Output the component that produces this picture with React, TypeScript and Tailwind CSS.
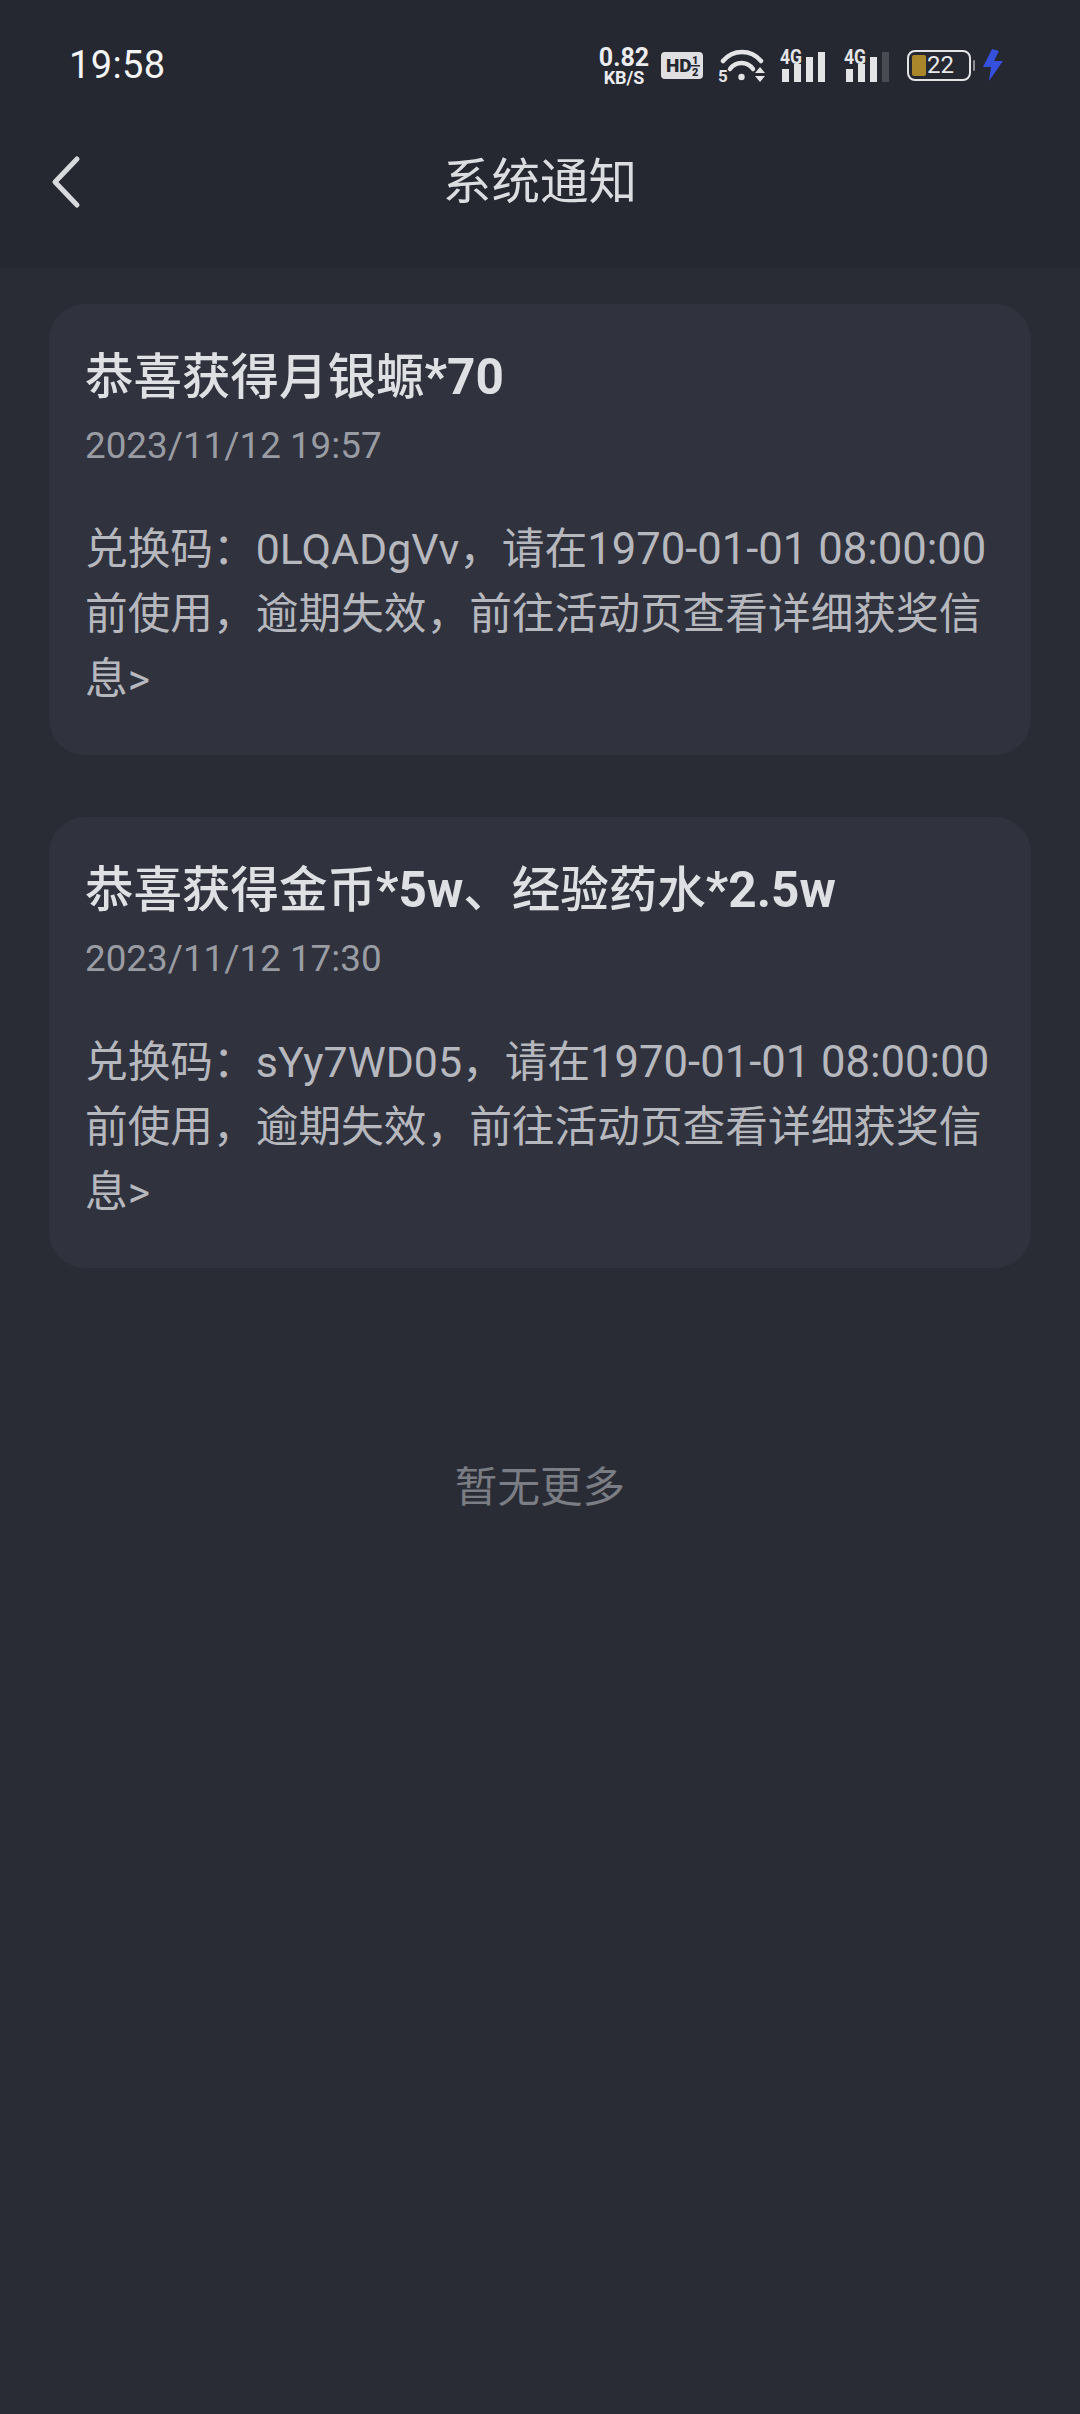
import React from 'react';

const NOTICES = [
  {
    title: [
      { text: '恭喜获得月银螈', bold: false },
      { text: '*70', bold: true },
    ],
    time: '2023/11/12 19:57',
    code: '0LQADgVv',
  },
  {
    title: [
      { text: '恭喜获得金币', bold: false },
      { text: '*5w', bold: true },
      { text: '、经验药水', bold: false },
      { text: '*2.5w', bold: true },
    ],
    time: '2023/11/12 17:30',
    code: 'sYy7WD05',
  },
];

const fontStack = "font-['Roboto','Noto_Sans_CJK_SC',sans-serif]";

const SignalIcon: React.FC<{ bars: number }> = ({ bars }) => (
  <svg width="48" height="33" viewBox="0 0 48 33" className="shrink-0 overflow-visible">
    <text x="0" y="15" fontFamily="Roboto" fontSize="20" fontWeight="700" fill="#e4e4e6" textLength="22" lengthAdjust="spacingAndGlyphs">4G</text>
    <rect x="2" y="20" width="7" height="13" fill="#e4e4e6" />
    <rect x="14" y="15" width="7" height="18" fill={bars > 1 ? '#e4e4e6' : '#4a4c54'} />
    <rect x="26" y="8" width="7" height="25" fill={bars > 2 ? '#e4e4e6' : '#4a4c54'} />
    <rect x="38" y="3" width="7" height="30" fill={bars > 3 ? '#e4e4e6' : '#4a4c54'} />
  </svg>
);

const StatusBar = () => (
  <div className="flex h-[128px] items-center justify-between pl-[69px] pr-[77px] pt-[2px]">
    <span className="text-[38px] leading-none font-normal text-[#f4f4f5] font-['Roboto',sans-serif] tracking-[0.4px]">19:58</span>
    <div className="flex items-center">
      {/* network speed */}
      <div className="flex w-[52px] flex-col items-center font-['Roboto',sans-serif] font-bold text-[#ececee]">
        <span className="text-[25px] leading-[24px]">0.82</span>
        <span className="text-[18px] leading-[15px]">KB/S</span>
      </div>
      {/* HD call badge */}
      <svg width="42" height="27" viewBox="0 0 42 27" className="ml-[11px] shrink-0 overflow-visible">
        <rect width="42" height="27" rx="4" fill="#dfdfe1" />
        <text x="5" y="20" fontFamily="Roboto" fontSize="19" fontWeight="900" fill="#25272f">HD</text>
        <text x="31" y="12" fontFamily="Roboto" fontSize="11" fontWeight="900" fill="#25272f">1</text>
        <rect x="30" y="13" width="9" height="1.5" fill="#25272f" />
        <text x="31" y="24" fontFamily="Roboto" fontSize="11" fontWeight="900" fill="#25272f">2</text>
      </svg>
      {/* wifi with up/down arrows */}
      <svg width="49" height="34" viewBox="0 0 49 34" className="ml-[15px] shrink-0 overflow-visible">
        <path d="M5 13 C15 1 33 1 43 13" fill="none" stroke="#e4e4e6" strokeWidth="4.5" strokeLinecap="round" />
        <path d="M12 21 C18 13 29 13 35 21" fill="none" stroke="#e4e4e6" strokeWidth="4.5" strokeLinecap="round" />
        <circle cx="23.5" cy="29" r="3.2" fill="#e4e4e6" />
        <text x="0" y="34" fontFamily="Roboto" fontSize="17" fontWeight="700" fill="#e4e4e6">5</text>
        <path d="M37 25 L42 19 L47 25 Z M37 28 L47 28 L42 34 Z" fill="#e4e4e6" />
      </svg>
      <div className="ml-[13px]"><SignalIcon bars={4} /></div>
      <div className="ml-[16px]"><SignalIcon bars={3} /></div>
      {/* battery */}
      <div className="ml-[15px] flex items-center">
        <div className="flex h-[31px] w-[64px] items-center rounded-[8px] border-2 border-[#e4e4e6] pl-[3px]">
          <div className="h-[21px] w-[14px] rounded-[2px] bg-[#ab872c]" />
          <span className="ml-[1px] text-[24px] leading-none font-['Roboto',sans-serif] text-[#e8e8ea]">22</span>
        </div>
        <div className="ml-[2px] h-[11px] w-[2px] rounded-full bg-[#8d8e93]" />
      </div>
      <svg width="20" height="32" viewBox="0 0 20 32" className="ml-[8px] shrink-0">
        <path d="M9 0 L0 18 L8 18 L6 32 L20 12 L11 12 L16 2 Z" fill="#3550dc" />
      </svg>
    </div>
  </div>
);

const NoticeCard: React.FC<(typeof NOTICES)[number]> = ({ title, time, code }) => (
  <div className="rounded-[36px] bg-[#30323e] pt-[40px] pb-[43px] pl-[36px] pr-[30px]">
    <h3 className="text-[48.5px] leading-[66px] text-[#dfe0e3]">
      {title.map((part, i) => (
        <span key={i} className={part.bold ? 'text-[49.5px] font-bold' : 'font-medium'}>{part.text}</span>
      ))}
    </h3>
    <p className="mt-[10px] text-[36.8px] leading-[50px] text-[#9a9ca3]">{time}</p>
    <p className="mt-[45.5px] text-[42.7px] leading-[65.2px] text-[#b6b8be]">
      兑换码：<span className="text-[42.9px]">{code}</span>，请在<span className="text-[43.6px]">1970-01-01 08:00:00</span>前使用，逾期失效，前往活动页查看详细获奖信息&gt;
    </p>
  </div>
);

export default function App() {
  return (
    <div className={`flex h-[2414px] w-[1080px] flex-col overflow-hidden bg-[#2a2c35] ${fontStack}`}>
      <header className="h-[268px] shrink-0 bg-[#252731]">
        <StatusBar />
        <div className="relative flex h-[108px] items-center justify-center pt-[3px]">
          <svg width="32" height="54" viewBox="0 0 32 54" className="absolute left-[50px] top-[27px]">
            <path d="M27 4 L5 27 L27 50" fill="none" stroke="#d8d9dc" strokeWidth="5" strokeLinecap="round" strokeLinejoin="round" />
          </svg>
          <h1 className="text-[48.6px] leading-none text-[#dcdde0]">系统通知</h1>
        </div>
      </header>

      <main className="flex flex-col gap-[62px] px-[49px] pt-[36px]">
        {NOTICES.map((n) => (
          <NoticeCard key={n.code} {...n} />
        ))}
      </main>

      <p className="mt-[189px] text-center text-[42.6px] leading-[60px] text-[#7b7d84]">暂无更多</p>
    </div>
  );
}
